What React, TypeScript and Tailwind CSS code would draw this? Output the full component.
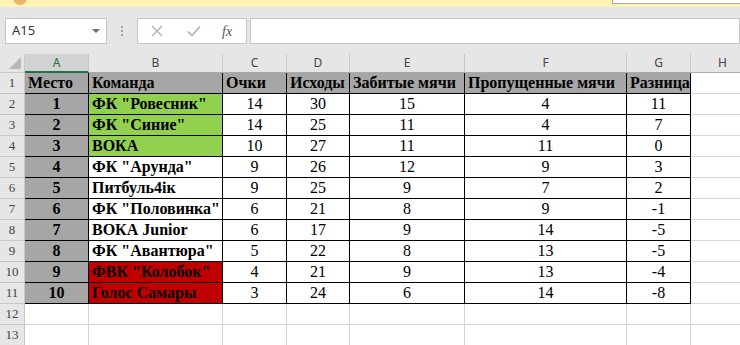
import React from "react";

const widths = [64, 134, 64, 63, 115, 162, 64, 64];
const letters = ["A", "B", "C", "D", "E", "F", "G", "H"];

const headers = ["Место", "Команда", "Очки", "Исходы", "Забитые мячи", "Пропущенные мячи", "Разница"];

const rows: { team: string; fill: string; vals: string[] }[] = [
  { team: 'ФК "Ровесник"', fill: "bg-[#92d050]", vals: ["14", "30", "15", "4", "11"] },
  { team: 'ФК "Синие"', fill: "bg-[#92d050]", vals: ["14", "25", "11", "4", "7"] },
  { team: "ВОКА", fill: "bg-[#92d050]", vals: ["10", "27", "11", "11", "0"] },
  { team: 'ФК "Арунда"', fill: "bg-white", vals: ["9", "26", "12", "9", "3"] },
  { team: "Питбуль4ік", fill: "bg-white", vals: ["9", "25", "9", "7", "2"] },
  { team: 'ФК "Половинка"', fill: "bg-white", vals: ["6", "21", "8", "9", "-1"] },
  { team: "ВОКА Junior", fill: "bg-white", vals: ["6", "17", "9", "14", "-5"] },
  { team: 'ФК "Авантюра"', fill: "bg-white", vals: ["5", "22", "8", "13", "-5"] },
  { team: 'ФВК "Колобок"', fill: "bg-[#c00000]", vals: ["4", "21", "9", "13", "-4"] },
  { team: "Голос Самары", fill: "bg-[#c00000]", vals: ["3", "24", "6", "14", "-8"] },
];

const RowHead = ({ n }: { n: number }) => (
  <div className="w-[25px] shrink-0 h-[21px] bg-[#e6e6e6] border-r border-b border-[#c8c8c8] text-center text-[13px] leading-[20px] text-[#444]">
    {n}
  </div>
);

const Cell = ({
  w,
  className,
  children,
}: {
  w: number;
  className: string;
  children?: React.ReactNode;
}) => (
  <div
    className={"shrink-0 h-[21px] border-r border-b text-[16px] leading-[20px] whitespace-nowrap " + className}
    style={{ width: w }}
  >
    {children}
  </div>
);

const App = () => {
  return (
    <div className="w-[740px] h-[345px] overflow-hidden bg-white relative" style={{ fontFamily: '"Liberation Serif", serif' }}>
      {/* message bar */}
      <div className="h-[7px] bg-[#fdf3b4] relative">
        <div className="absolute left-[13px] -top-[9px] w-[14px] h-[14px] rounded-full bg-[#e8b56a]" />
        <div className="absolute left-[612px] -top-[2px] w-[140px] h-[6px] bg-white border border-[#a8a8a8]" />
      </div>

      {/* formula bar */}
      <div className="h-[47px] bg-[#e6e6e6] flex items-start pt-[11px] pl-[5px] gap-0" style={{ fontFamily: '"Noto Sans", sans-serif' }}>
        <div className="w-[102px] h-[26px] bg-white border border-[#c6c6c6] flex items-center justify-between pl-[6px] pr-[6px]">
          <span className="text-[13px] text-[#333]">A15</span>
          <div className="w-0 h-0 border-l-[4px] border-r-[4px] border-t-[4px] border-l-transparent border-r-transparent border-t-[#6d6d6d]" />
        </div>
        <div className="w-[30px] h-[26px] flex flex-col items-center justify-center gap-[2px]">
          <div className="w-[2px] h-[2px] bg-[#a0a0a0]" />
          <div className="w-[2px] h-[2px] bg-[#a0a0a0]" />
          <div className="w-[2px] h-[2px] bg-[#a0a0a0]" />
        </div>
        <div className="w-[110px] h-[26px] bg-white border border-[#c6c6c6] flex items-center">
          <svg width="12" height="12" viewBox="0 0 12 12" className="ml-[13px]">
            <path d="M1 1 L11 11 M11 1 L1 11" stroke="#b0b0b0" strokeWidth="1.3" fill="none" />
          </svg>
          <svg width="14" height="12" viewBox="0 0 14 12" className="ml-[24px]">
            <path d="M1 6.5 L5 10.5 L13 1.5" stroke="#b0b0b0" strokeWidth="1.6" fill="none" />
          </svg>
          <span className="ml-[21px] text-[14px] italic text-[#555]" style={{ fontFamily: '"Liberation Serif", serif' }}>
            fx
          </span>
        </div>
        <div className="ml-[3px] flex-1 h-[26px] bg-white border border-[#c6c6c6]" />
      </div>

      {/* column headers */}
      <div className="flex h-[19px] bg-[#e6e6e6]" style={{ fontFamily: '"Noto Sans", sans-serif' }}>
        <div className="w-[25px] shrink-0 h-[19px] border-r border-b border-[#c8c8c8] relative">
          <div className="absolute right-[3px] bottom-[3px] w-0 h-0 border-l-[12px] border-t-[12px] border-l-transparent border-t-transparent border-r-0 border-b-0" style={{ borderRight: "0", borderBottom: "12px solid #b8b8b8", borderLeft: "12px solid transparent", borderTop: "0" }} />
        </div>
        {letters.map((l, i) => (
          <div
            key={l}
            className={
              "shrink-0 h-[19px] border-r border-[#c8c8c8] text-center text-[12px] leading-[18px] " +
              (i === 0 ? "bg-[#d2d2d2] border-b-2 border-b-[#217346] text-[#1e6b40]" : "border-b border-b-[#ababab] text-[#444]")
            }
            style={{ width: widths[i] }}
          >
            {l}
          </div>
        ))}
      </div>

      {/* row 1 headers */}
      <div className="flex">
        <RowHead n={1} />
        {headers.map((h, i) => (
          <Cell key={h} w={widths[i]} className="bg-[#a6a6a6] border-black font-bold text-black pl-[3px]">
            {h}
          </Cell>
        ))}
        <Cell w={widths[7]} className="border-[#d4d4d4]" />
      </div>

      {rows.map((r, idx) => (
        <div className="flex" key={idx}>
          <RowHead n={idx + 2} />
          <Cell w={widths[0]} className="bg-[#a6a6a6] border-black font-bold text-center text-black">
            {idx + 1}
          </Cell>
          <Cell w={widths[1]} className={r.fill + " border-black font-bold text-black pl-[3px] relative z-10"}>
            {r.team}
          </Cell>
          {r.vals.map((v, j) => (
            <Cell key={j} w={widths[j + 2]} className="bg-white border-black text-center text-black">
              {v}
            </Cell>
          ))}
          <Cell w={widths[7]} className="border-[#d4d4d4]" />
        </div>
      ))}

      {[12, 13].map((n) => (
        <div className="flex" key={n}>
          <RowHead n={n} />
          {widths.map((w, i) => (
            <Cell key={i} w={w} className="border-[#d4d4d4]" />
          ))}
        </div>
      ))}
    </div>
  );
};

export default App;
